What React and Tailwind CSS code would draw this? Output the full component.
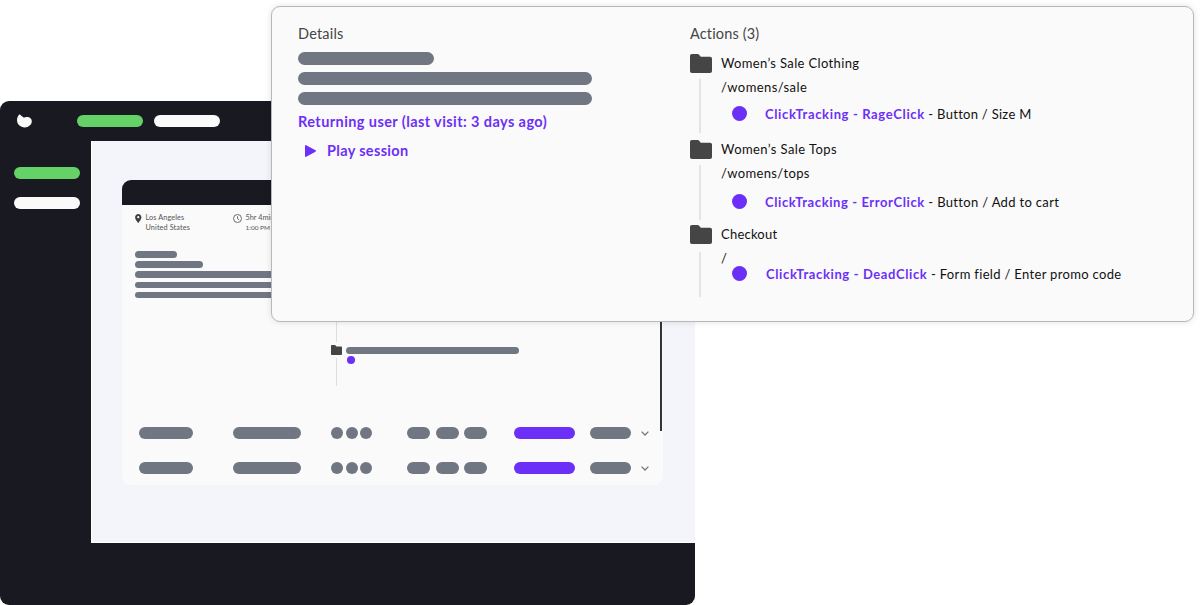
import React from 'react';
import { clsx } from 'clsx';

const actions = [
  {
    title: 'Women’s Sale Clothing',
    titleClass: 'tracking-[0.36px]',
    path: '/womens/sale',
    pathClass: 'h-4 tracking-[0.42px]',
    event: 'ClickTracking - RageClick',
    eventClass: 'tracking-[0.64px]',
    target: '- Button / Size M',
    targetClass: 'tracking-[0.29px]',
    groupClass: 'h-[86px]',
    bodyClass: 'mt-1.5 h-[54px]',
    clickClass: 'mt-2.5',
  },
  {
    title: 'Women’s Sale Tops',
    titleClass: 'tracking-[0.42px]',
    path: '/womens/tops',
    pathClass: 'h-4 tracking-[0.36px]',
    event: 'ClickTracking - ErrorClick',
    eventClass: 'tracking-[0.59px]',
    target: '- Button / Add to cart',
    targetClass: 'tracking-[0.33px]',
    groupClass: 'h-[85px]',
    bodyClass: 'mt-1.5 h-[55px]',
    clickClass: 'mt-3',
  },
  {
    title: 'Checkout',
    titleClass: 'tracking-[0.22px]',
    path: '/',
    pathClass: 'h-3',
    event: 'ClickTracking - DeadClick',
    eventClass: 'pl-px tracking-[0.62px]',
    target: '- Form field / Enter promo code',
    targetClass: 'tracking-[0.33px]',
    groupClass: 'h-[72px]',
    bodyClass: 'mt-2 h-[45px]',
    clickClass: 'mt-px',
  },
];

const Bar = ({ className }) => <div className={clsx('shrink-0 rounded-full', className)} />;

const Folder = ({ className }) => (
  <svg className={className} viewBox="0 0 22 19" preserveAspectRatio="none" fill="#454545">
    <path d="M2 0H7.6C8.4 0 8.8.4 9.3 1L10.8 2.7H20C21.2 2.7 22 3.5 22 4.7V17C22 18.2 21.2 19 20 19H2C.8 19 0 18.2 0 17V2C0 .8.8 0 2 0Z" />
  </svg>
);

const Logo = () => (
  <svg className="h-[14px] w-[15px]" viewBox="0 0 15 14" fill="#fafafa">
    <path d="M2.6.3C3.8 1 4.6 2.300 6.600 3.500C7.500 3.700 8.300 3 10.200 3C12.8 3 14.8 4.9 14.8 7.3C14.8 10.7 11.6 13.4 7.8 13.4C3.3 13.4 0 10.3 0 6.1C0 3.6 1.2 1.6 2.6.3Z" />
  </svg>
);

const SessionRow = () => (
  <div className="flex h-3 items-center">
    <Bar className="h-3 w-[54px] bg-[#707783]" />
    <Bar className="ml-[39.5px] h-3 w-[68.5px] bg-[#707783]" />
    <div className="ml-[30px] flex gap-[2.5px]">
      <Bar className="size-3 bg-[#707783]" />
      <Bar className="size-3 bg-[#707783]" />
      <Bar className="size-3 bg-[#707783]" />
    </div>
    <div className="ml-[35px] flex gap-[5.5px]">
      <Bar className="h-3 w-[23px] bg-[#707783]" />
      <Bar className="h-3 w-[23px] bg-[#707783]" />
      <Bar className="h-3 w-[23px] bg-[#707783]" />
    </div>
    <Bar className="ml-[26.5px] h-3 w-[61.5px] bg-[#6c2ff7]" />
    <Bar className="ml-[14.5px] h-3 w-[41.5px] bg-[#707783]" />
    <svg className="ml-[10px] h-[5px] w-2" viewBox="0 0 8 5" fill="none" stroke="#707783" strokeWidth="1.3">
      <path d="M.6.6L4 4L7.4.6" />
    </svg>
  </div>
);

const SessionCard = () => (
  <div className="flex h-[305px] w-[541px] flex-col overflow-hidden rounded-[9px] bg-[#fafafa]">
    <div className="h-[25px] shrink-0 bg-[#191922]" />
    <div className="flex h-[227px] shrink-0 justify-between">
      <div className="flex flex-col pt-2 pl-[13px]">
        <div className="flex text-[7.3px] leading-[9.5px] text-[#555]">
          <svg className="mt-px h-[9px] w-[6.5px]" viewBox="0 0 14 20" fill="#404040">
            <path fillRule="evenodd" d="M7 0C3.1 0 0 3.1 0 7C0 12.2 7 20 7 20S14 12.2 14 7C14 3.1 10.9 0 7 0ZM7 4.5A2.5 2.5 0 1 1 7 9.5A2.5 2.5 0 1 1 7 4.5Z" />
          </svg>
          <div className="ml-[4px] w-[87px] tracking-[0.1px]">
            <div>Los Angeles</div>
            <div>United States</div>
          </div>
          <svg className="mt-px size-[9px]" viewBox="0 0 18 18" fill="none" stroke="#555" strokeWidth="1.7">
            <circle cx="9" cy="9" r="8" />
            <path d="M9 4.5V9.3L12.3 11.5" />
          </svg>
          <div className="ml-[4px] whitespace-nowrap">
            <div>5hr 4min</div>
            <div className="text-[6.5px]">1:00 PM</div>
          </div>
        </div>
        <div className="mt-[19px] flex flex-col gap-[3.7px]">
          <Bar className="h-[6.5px] w-[42px] bg-[#707783]" />
          <Bar className="h-[6.5px] w-[68px] bg-[#707783]" />
          <Bar className="h-[6.5px] w-[180px] bg-[#707783]" />
          <Bar className="h-[6.5px] w-[180px] bg-[#707783]" />
          <Bar className="h-[6.5px] w-[180px] bg-[#707783]" />
        </div>
        <div className="mt-[23px] ml-[196px] flex flex-col">
          <div className="ml-[5px] h-[21px] w-px bg-[#dedede]" />
          <div className="mt-[3px] flex h-[10px] items-center">
            <Folder className="h-[10px] w-[11px]" />
            <Bar className="ml-1 h-[6.5px] w-[173px] bg-[#707783]" />
          </div>
          <div className="mt-px flex">
            <div className="mt-[2px] ml-[5px] h-7 w-px bg-[#dedede]" />
            <Bar className="ml-2.5 size-[7.5px] bg-[#6c2ff7]" />
          </div>
        </div>
      </div>
      <div className="mr-px h-[226px] w-[2.5px] bg-[#343434]" />
    </div>
    <div className="-mt-[4.6px] flex flex-col gap-[22.7px] pl-[17px]">
      <SessionRow />
      <SessionRow />
    </div>
  </div>
);

const AppWindow = () => (
  <div className="flex h-[504px] w-[695px] flex-col overflow-hidden rounded-[9px] bg-[#191922]">
    <header className="flex h-10 shrink-0 items-center pl-[17px]">
      <Logo />
      <Bar className="ml-[45px] h-3 w-[66px] bg-[#65d268]" />
      <Bar className="ml-[11px] h-3 w-[66px] bg-[#fafafa]" />
    </header>
    <div className="flex h-[402px]">
      <aside className="flex w-[91px] flex-col gap-[18px] pt-[26px] pl-[14px]">
        <Bar className="h-3 w-[66px] bg-[#65d268]" />
        <Bar className="h-3 w-[66px] bg-[#fafafa]" />
      </aside>
      <main className="flex-1 bg-[#f4f5fa] pt-[39px] pl-[31px] shadow-[inset_1px_-1px_0_#fff]">
        <SessionCard />
      </main>
    </div>
  </div>
);

const ActionGroup = ({ action }) => (
  <div className={action.groupClass}>
    <div className="flex h-[19px]">
      <Folder className="h-[19px] w-[22px]" />
      <span className={clsx('ml-[9px] pt-px', action.titleClass)}>{action.title}</span>
    </div>
    <div className={clsx('flex', action.bodyClass)}>
      <div className="ml-[9px] w-[2px] bg-[#e4e4e4]" />
      <div className="ml-5">
        <div className={clsx('flex items-center', action.pathClass)}>{action.path}</div>
        <div className={clsx('ml-[11px] flex h-4 items-center', action.clickClass)}>
          <Bar className="size-[15px] bg-[#6c2ff7]" />
          <span className={clsx('ml-[18px] pt-px font-bold text-[#6c2ff7]', action.eventClass)}>{action.event}</span>
          <span className={clsx('ml-[3.5px] pt-px', action.targetClass)}>{action.target}</span>
        </div>
      </div>
    </div>
  </div>
);

const DetailsPopup = () => (
  <div className="absolute top-[6px] left-[271px] flex h-[316px] w-[923px] rounded-[9px] border border-[#b8b8b8] bg-[#fafafa] shadow-[0_0_6px_rgba(0,0,0,0.12)]">
    <section className="w-[392px] shrink-0 pt-[18px] pl-[26px]">
      <h2 className="h-4 pt-px text-[14.5px] leading-4 tracking-[0.2px] text-[#454545]">Details</h2>
      <div className="mt-[11px] flex flex-col gap-[7px]">
        <Bar className="h-[13px] w-[136px] bg-[#707783]" />
        <Bar className="h-[13px] w-[294px] bg-[#707783]" />
        <Bar className="h-[13px] w-[294px] bg-[#707783]" />
      </div>
      <div className="mt-[7px] text-[14.5px] leading-5 font-bold tracking-[0.41px] text-[#6c2ff7]">Returning user (last visit: 3 days ago)</div>
      <div className="mt-[9px] flex items-center text-[14.5px] leading-5 font-bold text-[#6c2ff7]">
        <svg className="ml-[7px] h-3 w-[11px]" viewBox="0 0 11 12" fill="#6c2ff7">
          <path d="M0 .8C0 .2.6-.1 1.2.2L10.5 5.3C11.1 5.7 11.1 6.3 10.5 6.7L1.2 11.8C.6 12.1 0 11.8 0 11.2Z" />
        </svg>
        <span className="ml-[11px] tracking-[0.33px]">Play session</span>
      </div>
    </section>
    <section className="pt-[18px] pl-[26px] text-[13px] leading-4 whitespace-nowrap text-[#111]">
      <h2 className="mb-[13px] h-4 pt-px text-[14.5px] leading-4 tracking-[0.15px] text-[#454545]">Actions (3)</h2>
      {actions.map((action) => (
        <ActionGroup key={action.title} action={action} />
      ))}
    </section>
  </div>
);

export default function App() {
  return (
    <div className="relative h-[605px] w-[1200px] overflow-hidden bg-white pt-[101px] font-['Lato',sans-serif]">
      <AppWindow />
      <DetailsPopup />
    </div>
  );
}
